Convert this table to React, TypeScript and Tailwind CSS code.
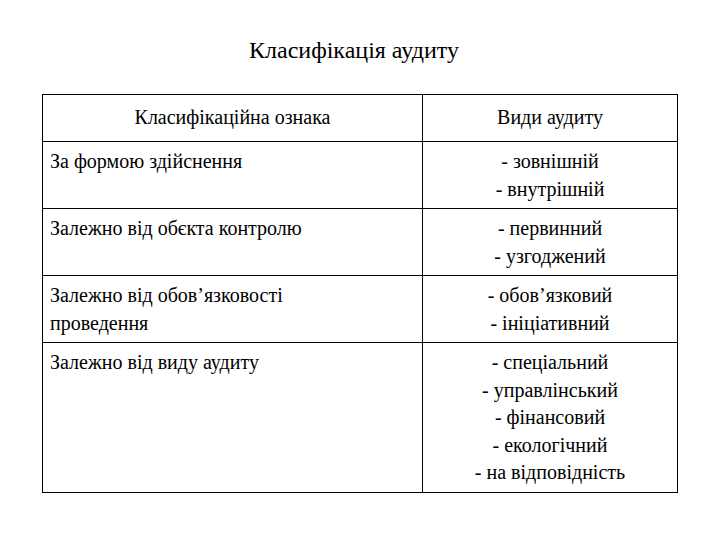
export default function App() {
  return (
    <div className="font-['Liberation_Serif']">
      <div className="w-[720px] h-[540px] bg-white text-black">
        <div className="pt-[36px] pr-[12px] text-center text-[24px] leading-[28px]">Класифікація аудиту</div>
        <table className="mt-[30px] ml-[42px] w-[636px] border-collapse border border-black text-[20px] leading-[27.5px]">
          <tbody>
            <tr className="h-[47px]">
              <td className="w-[380px] border border-black text-center align-middle">Класифікаційна ознака</td>
              <td className="border border-black text-center align-middle">Види аудиту</td>
            </tr>
            <tr>
              <td className="border border-black align-top pl-[7px] pt-[6px] pb-[5px]">За формою здійснення</td>
              <td className="border border-black align-top text-center pt-[6px] pb-[5px]">
                <div>- зовнішній</div>
                <div>- внутрішній</div>
              </td>
            </tr>
            <tr>
              <td className="border border-black align-top pl-[7px] pt-[6px] pb-[5px]">Залежно від обєкта контролю</td>
              <td className="border border-black align-top text-center pt-[6px] pb-[5px]">
                <div>- первинний</div>
                <div>- узгоджений</div>
              </td>
            </tr>
            <tr>
              <td className="border border-black align-top pl-[7px] pt-[6px] pb-[5px]">
                <div>Залежно від обов’язковості</div>
                <div>проведення</div>
              </td>
              <td className="border border-black align-top text-center pt-[6px] pb-[5px]">
                <div>- обов’язковий</div>
                <div>- ініціативний</div>
              </td>
            </tr>
            <tr>
              <td className="border border-black align-top pl-[7px] pt-[6px] pb-[5px]">Залежно від виду аудиту</td>
              <td className="border border-black align-top text-center pt-[6px] pb-[5px]">
                <div>- спеціальний</div>
                <div>- управлінський</div>
                <div>- фінансовий</div>
                <div>- екологічний</div>
                <div>- на відповідність</div>
              </td>
            </tr>
          </tbody>
        </table>
      </div>
    </div>
  )
}
